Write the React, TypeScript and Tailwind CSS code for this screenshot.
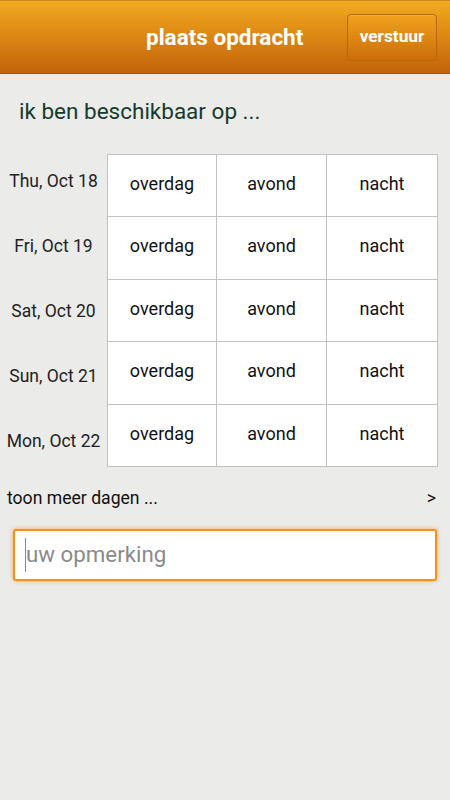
import { useState } from "react";

const days = ["Thu, Oct 18", "Fri, Oct 19", "Sat, Oct 20", "Sun, Oct 21", "Mon, Oct 22"];
const slots = ["overdag", "avond", "nacht"];

export default function App() {
  const [note, setNote] = useState("");

  return (
    <div className="w-[450px] h-[800px] bg-[#ebebe9] font-['Roboto',sans-serif] flex flex-col">
      <header className="h-[74px] flex items-center border-t border-t-[#c98a1a] border-b border-b-[#a9520a] bg-gradient-to-b from-[#f2ab1f] to-[#c2620a]">
        <div className="flex-1 pl-[146px] pt-[2px] text-white text-[22.5px] font-bold">plaats opdracht</div>
        <button className="mr-[13px] w-[90px] h-[47px] rounded-[4px] border border-[#b9650a] bg-gradient-to-b from-[#efa21c] to-[#cc6d0b] text-white text-[17.3px] font-bold shadow-[inset_0_1px_0_rgba(255,255,255,0.15)]">
          verstuur
        </button>
      </header>

      <p className="pl-[19px] pt-[24px] text-[22.5px] text-[#173a2c] leading-[26px]">ik ben beschikbaar op ...</p>

      <div className="flex items-start mt-[30px]">
        <div className="w-[107px] flex flex-col -mt-[5px]">
          {days.map((d) => (
            <div key={d} className="h-[65px] flex items-center justify-center text-[17.5px] text-[#222]">
              {d}
            </div>
          ))}
        </div>
        <div className="w-[331px] grid grid-cols-[108px_109px_110px] grid-rows-[61px_62px_61px_62px_61px] bg-[#c2c2c2] gap-[1px] border border-[#c2c2c2]">
          {days.map((d) =>
            slots.map((s) => (
              <div key={d + s} className="bg-white flex items-center justify-center pb-[5px] text-[18px] text-[#111]">
                {s}
              </div>
            ))
          )}
        </div>
      </div>

      <div className="flex items-center justify-between pl-[7px] pr-[14px] mt-[11px] leading-[26px] text-[17.6px] text-[#111]">
        <span>toon meer dagen ...</span>
        <span>&gt;</span>
      </div>

      <div className="mx-[13px] mt-[18px] h-[52px] rounded-[3px] border-2 border-[#f7901a] bg-white shadow-[0_0_4px_rgba(247,144,26,0.7)] flex items-center px-[10px]">
        <input
          value={note}
          onChange={(e) => setNote(e.target.value)}
          placeholder="uw opmerking"
          className="w-full outline-none bg-transparent text-[22.3px] text-[#333] placeholder:text-[#8a8a8a] border-l border-[#888] pl-[0px]"
        />
      </div>
    </div>
  );
}
